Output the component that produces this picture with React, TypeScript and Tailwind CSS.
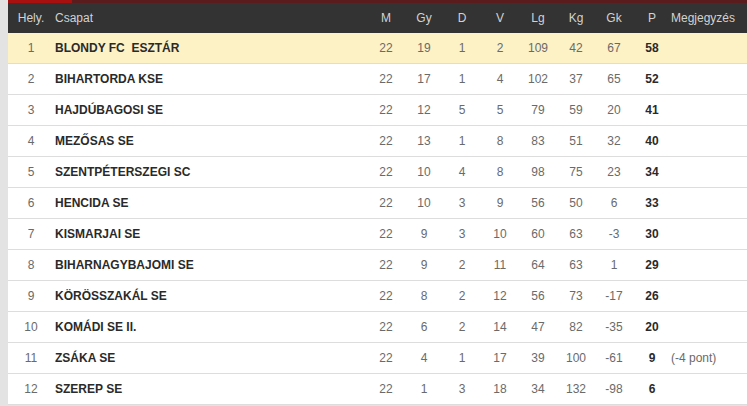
const rows: [number, string, number, number, number, number, number, number, number, number, string][] = [
  [1, "BLONDY FC  ESZTÁR", 22, 19, 1, 2, 109, 42, 67, 58, ""],
  [2, "BIHARTORDA KSE", 22, 17, 1, 4, 102, 37, 65, 52, ""],
  [3, "HAJDÚBAGOSI SE", 22, 12, 5, 5, 79, 59, 20, 41, ""],
  [4, "MEZŐSAS SE", 22, 13, 1, 8, 83, 51, 32, 40, ""],
  [5, "SZENTPÉTERSZEGI SC", 22, 10, 4, 8, 98, 75, 23, 34, ""],
  [6, "HENCIDA SE", 22, 10, 3, 9, 56, 50, 6, 33, ""],
  [7, "KISMARJAI SE", 22, 9, 3, 10, 60, 63, -3, 30, ""],
  [8, "BIHARNAGYBAJOMI SE", 22, 9, 2, 11, 64, 63, 1, 29, ""],
  [9, "KÖRÖSSZAKÁL SE", 22, 8, 2, 12, 56, 73, -17, 26, ""],
  [10, "KOMÁDI SE II.", 22, 6, 2, 14, 47, 82, -35, 20, ""],
  [11, "ZSÁKA SE", 22, 4, 1, 17, 39, 100, -61, 9, "(-4 pont)"],
  [12, "SZEREP SE", 22, 1, 3, 18, 34, 132, -98, 6, ""],
];

const stats = ["M", "Gy", "D", "V", "Lg", "Kg", "Gk", "P"];

export default function App() {
  return (
    <div className="flex h-[406px] w-[747px] overflow-hidden bg-[#e3e3e3] font-['Liberation_Sans',Arial,sans-serif] text-[12px]">
      <div className="ml-2 flex w-[739px] flex-col">
        <div className="flex h-[3px]">
          <div className="w-[64px] bg-[#a80f0f]" />
          <div className="flex-1 bg-[#5a1c1c]" />
        </div>
        <div className="flex h-[30px] items-center bg-[#333333] text-[#d2d2d2]">
          <div className="w-[46px] text-center">Hely.</div>
          <div className="w-[313px] pl-px">Csapat</div>
          {stats.map((s) => (
            <div key={s} className="w-[38px] text-center">
              {s}
            </div>
          ))}
          <div className="flex-1">Megjegyzés</div>
        </div>
        {rows.map((r) => (
          <div
            key={r[0]}
            className={`flex h-[31px] items-center border-b border-[#dddddd] text-[#6a6a6a] ${
              r[0] === 1 ? "bg-[#fdf1c6]" : "bg-white"
            }`}
          >
            <div className="w-[46px] text-center">{r[0]}</div>
            <div className="w-[313px] whitespace-pre pl-px font-bold text-[#2a2a2a]">{r[1]}</div>
            {r.slice(2, 9).map((v, i) => (
              <div key={i} className="w-[38px] text-center">
                {v}
              </div>
            ))}
            <div className="w-[38px] text-center font-bold text-[#2a2a2a]">{r[9]}</div>
            <div className="flex-1">{r[10]}</div>
          </div>
        ))}
      </div>
    </div>
  );
}
